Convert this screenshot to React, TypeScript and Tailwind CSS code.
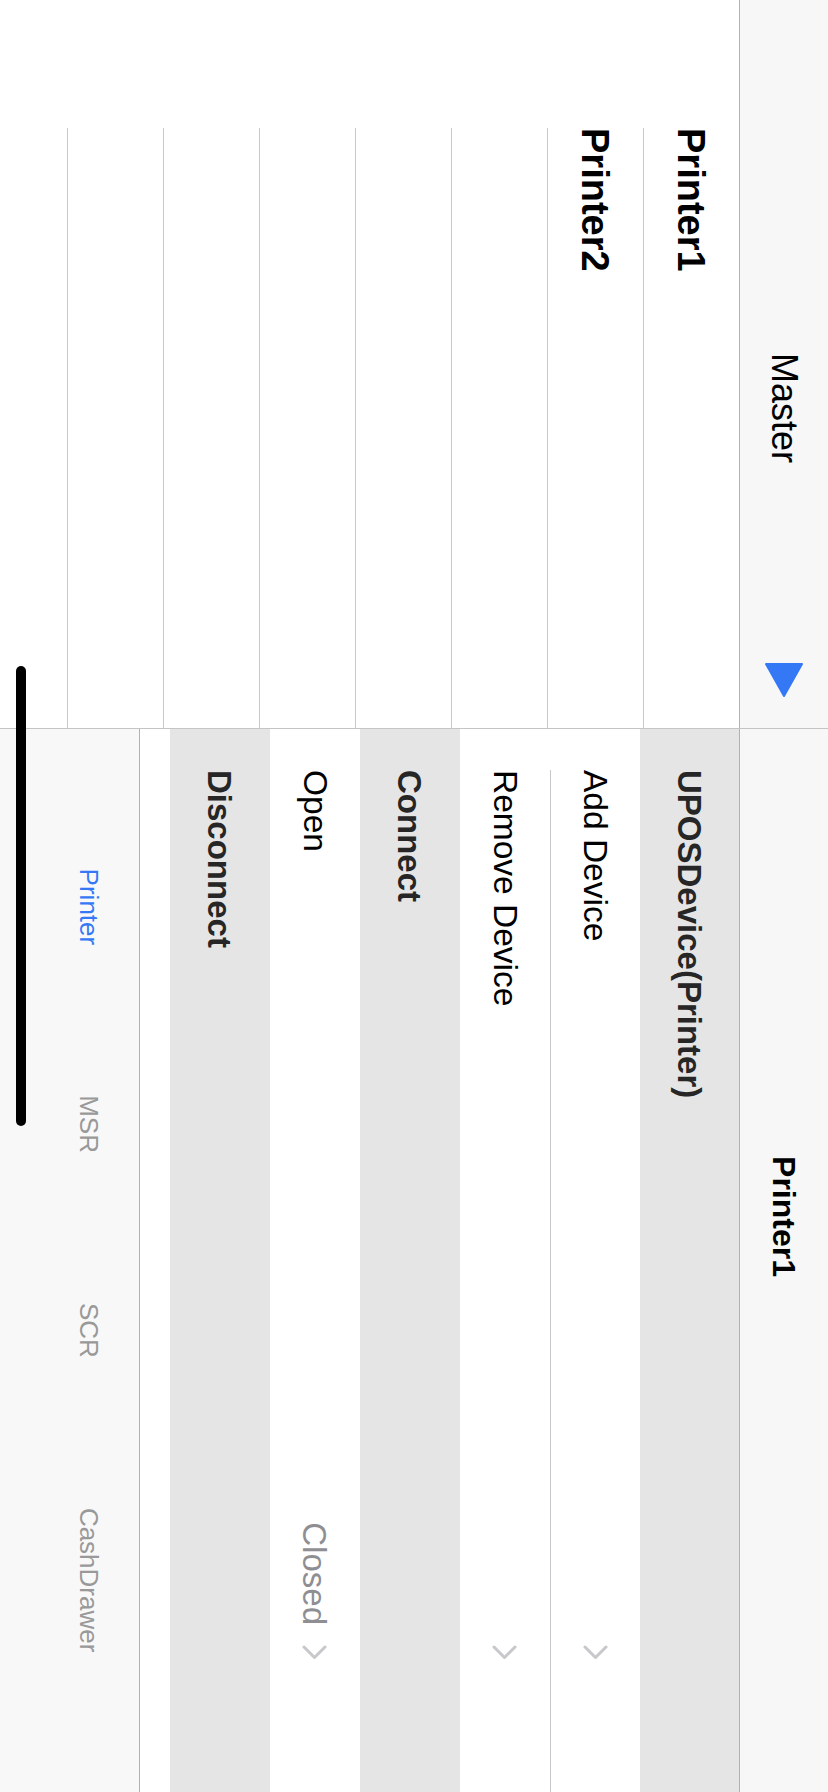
import React from "react";

function Chevron() {
  return (
    <svg width="15" height="25" viewBox="0 0 15 25" className="shrink-0">
      <path d="M2 2 L12.5 12.5 L2 23" fill="none" stroke="#c7c7cc" strokeWidth="3" strokeLinecap="round" strokeLinejoin="round" />
    </svg>
  );
}

function Master() {
  const rows = ["Printer1", "Printer2", "", "", "", "", "", ""];
  return (
    <div className="w-[729px] h-full shrink-0 flex flex-col border-r border-[#c4c4c4] overflow-hidden bg-white">
      <div className="relative h-[89px] shrink-0 bg-[#f7f7f7] border-b border-[#b2b2b2] flex items-center justify-center pl-[88px]">
        <span className="text-[36px] leading-none text-black">Master</span>
        <svg className="absolute left-[662px] top-[24px]" width="36" height="40" viewBox="0 0 36 40">
          <path d="M2 2 L34 20 L2 38 Z" fill="#3478f6" stroke="#3478f6" strokeWidth="2" strokeLinejoin="round" />
        </svg>
      </div>
      {rows.map((t, i) => (
        <div key={i} className="h-[96px] shrink-0 pl-[128px]">
          <div className="h-full border-b border-[#c8c7cc] flex items-center text-[38px] font-bold leading-none text-black">
            {t}
          </div>
        </div>
      ))}
    </div>
  );
}

function GrayRow({ label, h }: { label: string; h: string }) {
  return (
    <div className={`${h} shrink-0 bg-[#e5e5e5] pl-[41px] flex items-center`}>
      <span className="text-[33px] font-bold leading-none text-[#262626]">{label}</span>
    </div>
  );
}

function WhiteRow({ label, detail, separator }: { label: string; detail?: string; separator?: boolean }) {
  return (
    <div className="h-[90px] shrink-0 bg-white pl-[41px] flex">
      <div className={`flex-1 h-full flex items-center pr-[132px] ${separator ? "border-b border-[#c8c7cc]" : ""}`}>
        <span className="flex-1 text-[33.5px] leading-none text-black">{label}</span>
        {detail ? <span className="text-[33px] leading-none text-[#8e8e93] mr-[20px]">{detail}</span> : null}
        <Chevron />
      </div>
    </div>
  );
}

function TabBar() {
  const tabs = ["Printer", "MSR", "SCR", "CashDrawer"];
  return (
    <div className="h-[140px] shrink-0 bg-[#f8f8f8] border-t border-[#b2b2b2] flex justify-center gap-[150px] pt-[37px]">
      {tabs.map((t, i) => (
        <span key={t} className={`text-[26px] leading-none ${i === 0 ? "text-[#3478f6]" : "text-[#999999]"}`}>
          {t}
        </span>
      ))}
    </div>
  );
}

function Detail() {
  return (
    <div className="flex-1 h-full flex flex-col bg-white">
      <div className="h-[89px] shrink-0 bg-[#f7f7f7] border-b border-[#b2b2b2] flex items-center justify-center pr-[88px]">
        <span className="text-[32px] font-bold leading-none text-black">Printer1</span>
      </div>
      <GrayRow label="UPOSDevice(Printer)" h="h-[99px]" />
      <WhiteRow label="Add Device" separator />
      <WhiteRow label="Remove Device" />
      <GrayRow label="Connect" h="h-[100px]" />
      <WhiteRow label="Open" detail="Closed" />
      <GrayRow label="Disconnect" h="h-[100px]" />
      <div className="flex-1" />
      <TabBar />
    </div>
  );
}

export default function App() {
  return (
    <div className="w-[828px] h-[1792px] overflow-hidden bg-white">
      <div className="relative w-[1792px] h-[828px] origin-top-left translate-x-[828px] rotate-90 flex bg-white font-[family-name:'Liberation_Sans',Arial,sans-serif]">
        <Master />
        <Detail />
        <div className="absolute left-[666px] top-[802px] w-[460px] h-[10px] rounded-full bg-black" />
      </div>
    </div>
  );
}
